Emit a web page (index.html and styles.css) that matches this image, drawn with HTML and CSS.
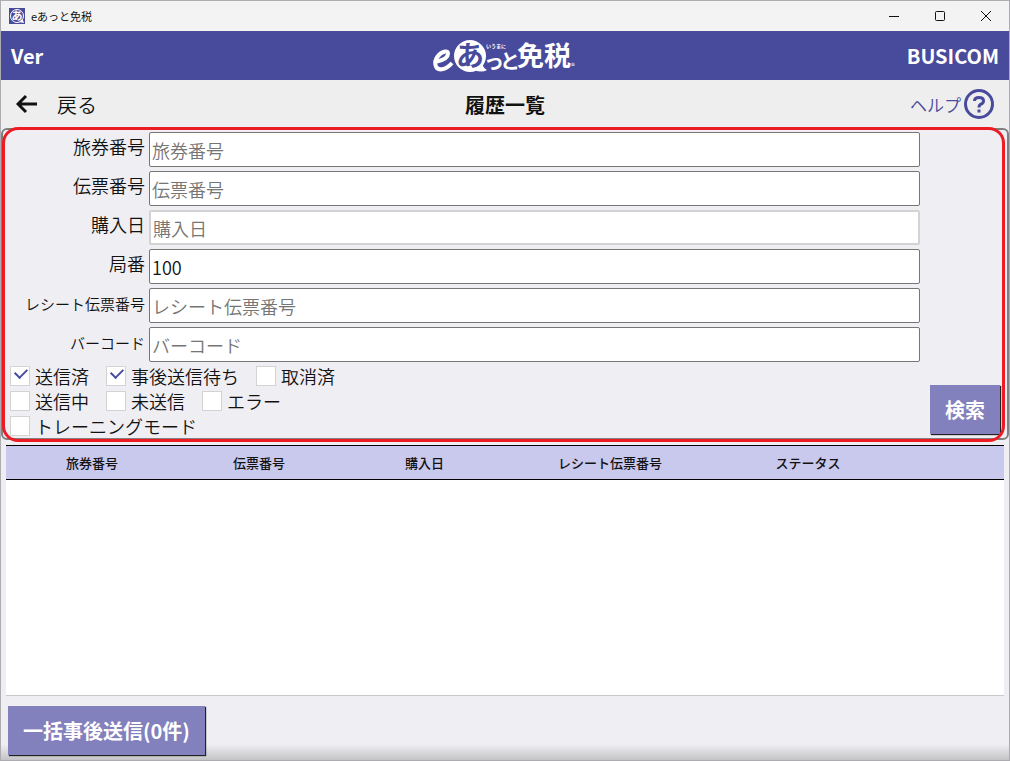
FILE: index.html
```
<!DOCTYPE html>
<html lang="ja">
<head>
	<meta charset="UTF-8">
	<title>eあっと免税</title>
	<link rel="stylesheet" href="styles.css">
</head>
<body>
	<div class="ventana">

		<div class="titulo">
			<svg class="icono" width="16" height="16" viewBox="0 0 16 16">
				<rect width="16" height="16" fill="#484a9c"/>
				<circle cx="8" cy="8" r="6.500" fill="none" stroke="#fff" stroke-width="1"/>
				<path d="M10 14 L15 15 L13.500 11z" fill="#fff"/>
				<text x="8" y="12" text-anchor="middle" class="iconoTexto">あ</text>
			</svg>
			<span class="nombre">eあっと免税</span>
			<button type="button" class="control" aria-label="最小化">
				<svg width="10" height="10"><path d="M0 5.500h10"/></svg>
			</button>
			<button type="button" class="control" aria-label="最大化">
				<svg width="10" height="10"><rect x="0.500" y="0.500" width="9" height="9" rx="1"/></svg>
			</button>
			<button type="button" class="control" aria-label="閉じる">
				<svg width="10" height="10"><path d="M0 0L10 10M10 0L0 10"/></svg>
			</button>
		</div>

		<header class="cabecera">
			<span>Ver</span>
			<svg class="logo" width="150" height="44" viewBox="0 0 150 44">
				<path class="logoE" d="M7 27.500Q18 25 18 19.500Q18 17 15 17.500C9 18.500 4 26 5.500 31C7 38 16 36 22 29"/>
				<circle cx="40" cy="22" r="16" fill="#fff"/>
				<path d="M44 36 Q52 39 57 36 Q53 34 52 29z" fill="#fff"/>
				<text x="40" y="32" text-anchor="middle" class="logoA">あ</text>
				<text x="56" y="14" class="logoMini">いうまに</text>
				<text x="54" y="35" class="logoTo">っ</text>
				<text x="70" y="35" class="logoTo">と</text>
				<text x="87" y="32" class="logoZei">免税</text>
				<text x="141" y="35" class="logoMini logoR">®</text>
			</svg>
			<span class="marca">BUSICOM</span>
		</header>

		<nav class="barra">
			<a href="#" class="volver">
				<svg width="22" height="20" viewBox="0 0 22 20"><path d="M10 2L2 10L10 18M2 10H21"/></svg>
				<span>戻る</span>
			</a>
			<h1>履歴一覧</h1>
			<a href="#" class="ayuda">
				<span>ヘルプ</span>
				<svg width="30" height="30" viewBox="0 0 30 30">
					<circle cx="15" cy="15" r="13.500"/>
					<path d="M10.500 12Q10.500 8.500 15 8.500Q19.500 8.500 19.500 12Q19.500 14 17 15.200Q15 16.200 15 18.500"/>
					<path d="M15 20.500V23.500"/>
				</svg>
			</a>
		</nav>

		<main>
			<form class="busqueda">
				<div class="campo">
					<label for="pasaporte">旅券番号</label>
					<input type="text" id="pasaporte" placeholder="旅券番号">
				</div>
				<div class="campo">
					<label for="recibo">伝票番号</label>
					<input type="text" id="recibo" placeholder="伝票番号">
				</div>
				<div class="campo">
					<label for="fecha">購入日</label>
					<input type="text" id="fecha" class="fecha" placeholder="購入日">
				</div>
				<div class="campo">
					<label for="estacion">局番</label>
					<input type="text" id="estacion" value="100">
				</div>
				<div class="campo">
					<label for="ticket" class="chico">レシート伝票番号</label>
					<input type="text" id="ticket" placeholder="レシート伝票番号">
				</div>
				<div class="campo">
					<label for="codigo" class="chico">バーコード</label>
					<input type="text" id="codigo" placeholder="バーコード">
				</div>

				<div class="inferior">
					<div class="estados">
						<div class="fila">
							<label><input type="checkbox" checked>送信済</label>
							<label><input type="checkbox" checked>事後送信待ち</label>
							<label><input type="checkbox">取消済</label>
						</div>
						<div class="fila">
							<label><input type="checkbox">送信中</label>
							<label><input type="checkbox">未送信</label>
							<label><input type="checkbox">エラー</label>
						</div>
						<div class="fila">
							<label><input type="checkbox">トレーニングモード</label>
						</div>
					</div>
					<button type="button" class="boton">検索</button>
				</div>
				<div class="marco"></div>
			</form>

			<div class="lista">
				<table>
					<thead>
						<tr>
							<th class="colPasaporte">旅券番号</th>
							<th class="colRecibo">伝票番号</th>
							<th class="colFecha">購入日</th>
							<th class="colTicket">レシート伝票番号</th>
							<th class="colEstado">ステータス</th>
							<th></th>
						</tr>
					</thead>
					<tbody></tbody>
				</table>
			</div>
		</main>

		<footer class="pie">
			<button type="button" class="boton">一括事後送信(0件)</button>
		</footer>
	</div>
</body>
</html>
```
FILE: styles.css
```
*{
	box-sizing: border-box;
}

body{
	margin: 0;
	font-family: "Noto Sans CJK JP", sans-serif;
	font-size: 18px;
	font-weight: 350;
	color: #111;
}

button, input{
	font: inherit;
}

a{
	text-decoration: none;
}

.ventana{
	display: flex;
	flex-direction: column;
	min-height: 100vh;
	border: solid 1px #adadb1;
	background: #efeef3;
}

/* barra de titulo */
.titulo{
	display: flex;
	align-items: center;
	height: 30px;
	padding-left: 8px;
	background: #f3f3f3;
}

.nombre{
	flex: 1;
	margin-left: 6px;
	font-size: 11px;
	font-weight: 400;
}

.iconoTexto{
	font-size: 11px;
	font-weight: 700;
	fill: #fff;
}

.control{
	display: flex;
	align-items: center;
	justify-content: center;
	width: 46px;
	height: 30px;
	padding: 0;
	border: none;
	background: none;
}

.control svg{
	fill: none;
	stroke: #111;
}

/* cabecera */
.cabecera{
	display: grid;
	grid-template-columns: 1fr auto 1fr;
	align-items: center;
	height: 49px;
	padding: 0 10px;
	background: #484a9c;
	color: #fff;
	font-size: 20px;
	font-weight: 700;
}

.marca{
	text-align: right;
}

.logo text{
	fill: #fff;
}

.logo .logoE{
	fill: none;
	stroke: #fff;
	stroke-width: 4;
}

.logo .logoA{
	font-size: 28px;
	fill: #484a9c;
}

.logo .logoMini{
	font-size: 5px;
}

.logo .logoR{
	font-size: 8px;
	font-weight: 400;
}

.logo .logoTo{
	font-size: 20px;
}

.logo .logoZei{
	font-size: 27px;
	font-weight: 700;
}

.barra{
	display: grid;
	grid-template-columns: 1fr auto 1fr;
	align-items: center;
	height: 48px;
	padding: 0 15px;
	background: #eee;
}

.barra h1{
	margin: 0;
	font-size: 20px;
	font-weight: 700;
}

.barra svg{
	fill: none;
	stroke: currentColor;
	stroke-width: 3;
}

.volver{
	display: flex;
	align-items: center;
	gap: 19px;
	font-size: 20px;
	color: #111;
}

.ayuda{
	display: flex;
	align-items: center;
	justify-content: flex-end;
	gap: 3px;
	font-size: 17px;
	color: #484a9c;
}

/* formulario de busqueda */
main{
	flex: 1;
	display: flex;
	flex-direction: column;
}

.busqueda{
	position: relative;
	padding: 2px 7px 4px;
	border: solid 2px #808080;
	border-radius: 6px;
}

.marco{
	position: absolute;
	inset: -3px 2px -4px -1px;
	border: solid 3px #ed1c24;
	border-radius: 16px;
	pointer-events: none;
}

.campo{
	display: grid;
	grid-template-columns: 135px 1fr;
	gap: 4px;
	height: 35px;
	margin-bottom: 4px;
	padding-right: 80px;
}

.campo label{
	line-height: 29px;
	text-align: right;
}

.campo .chico{
	font-size: 15px;
	line-height: 31px;
}

.campo input{
	min-width: 0;
	padding: 0 2px;
	border: solid 1px #767676;
	border-radius: 2px;
	background: #fff;
	color: #111;
}

.campo input::placeholder{
	color: #757575;
}

.campo .fecha{
	border: solid 2px #d3d3d3;
}

.inferior{
	display: flex;
	align-items: flex-end;
	justify-content: space-between;
	height: 68px;
}

.estados{
	align-self: flex-start;
}

.fila{
	display: flex;
	gap: 17px;
	height: 20px;
	margin-bottom: 5px;
}

.fila label{
	display: flex;
	align-items: center;
	gap: 5px;
}

.fila input{
	appearance: none;
	width: 20px;
	height: 20px;
	margin: 0;
	border: solid 1px #d3d3d3;
	background: #fff;
}

.fila input:checked::before{
	content: "";
	display: block;
	width: 10px;
	height: 6px;
	margin: 1px 0 0 4px;
	border: solid #484a9c;
	border-width: 0 0 2px 2px;
	transform: rotate(-45deg);
}

.estados .fila:last-child{
	margin-bottom: 0;
}

.boton{
	height: 49px;
	padding: 0 15px;
	border: none;
	background: #8280bd;
	box-shadow: 1px 1px 1px #222;
	color: #fff;
	font-size: 20px;
	font-weight: 700;
}

/* lista de resultados */
.lista{
	flex: 1;
	margin: 5px 5px 0;
	border-bottom: solid 1px #c8c8c8;
	background: #fff;
}

table{
	width: 100%;
	table-layout: fixed;
	border-collapse: collapse;
}

th{
	height: 34px;
	padding: 0;
	border-top: solid 1px #000;
	border-bottom: solid 1px #000;
	background: #c9c8ed;
	font-size: 13px;
	font-weight: 500;
}

.colPasaporte{
	width: 172px;
}

.colRecibo{
	width: 162px;
}

.colFecha{
	width: 169px;
}

.colTicket{
	width: 202px;
}

.colEstado{
	width: 194px;
}

.pie{
	display: flex;
	padding: 10px 7px 5px;
	background: linear-gradient(#efeef3 75%, #c4c4c6);
}
```
